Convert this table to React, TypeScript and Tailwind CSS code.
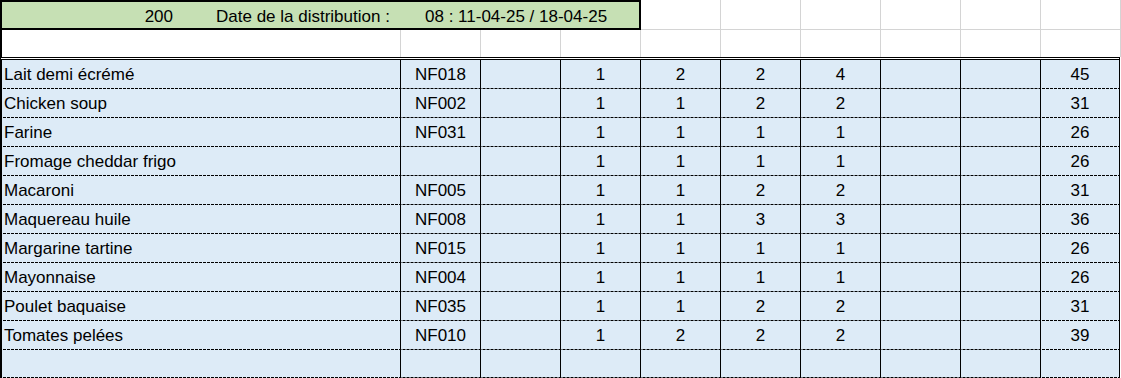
import React from 'react';

type Row = [string, string, string, string, string, string, string];

const rows: Row[] = [
  ['Lait demi écrémé', 'NF018', '1', '2', '2', '4', '45'],
  ['Chicken soup', 'NF002', '1', '1', '2', '2', '31'],
  ['Farine', 'NF031', '1', '1', '1', '1', '26'],
  ['Fromage cheddar frigo', '', '1', '1', '1', '1', '26'],
  ['Macaroni', 'NF005', '1', '1', '2', '2', '31'],
  ['Maquereau huile', 'NF008', '1', '1', '3', '3', '36'],
  ['Margarine tartine', 'NF015', '1', '1', '1', '1', '26'],
  ['Mayonnaise', 'NF004', '1', '1', '1', '1', '26'],
  ['Poulet baquaise', 'NF035', '1', '1', '2', '2', '31'],
  ['Tomates pelées', 'NF010', '1', '2', '2', '2', '39'],
];

const dashed =
  'bg-[#ddebf7] bg-[image:linear-gradient(to_right,#000_75%,transparent_75%)] bg-[length:4px_1px] bg-repeat-x bg-bottom';

function Cell({ children, last }: { children?: React.ReactNode; last?: boolean }) {
  return (
    <div
      className={`${last ? 'w-[79px]' : 'w-[80px]'} border-l border-black flex items-center justify-center pb-px ${dashed}`}
    >
      {children}
    </div>
  );
}

function TableRow({ row, height }: { row?: Row; height: string }) {
  const [name, code, a, b, c, d, total] = row ?? ['', '', '', '', '', '', ''];
  return (
    <div className={`flex ${height}`}>
      <div className={`w-[398px] flex items-center pl-[2px] pb-px ${dashed}`}>{name}</div>
      <Cell>{code}</Cell>
      <Cell />
      <Cell>{a}</Cell>
      <Cell>{b}</Cell>
      <Cell>{c}</Cell>
      <Cell>{d}</Cell>
      <Cell />
      <Cell />
      <Cell last>{total}</Cell>
    </div>
  );
}

export default function App() {
  return (
    <div className="w-[1121px] h-[378px] overflow-hidden bg-white text-black font-['Liberation_Sans',Arial,sans-serif] text-[17px] leading-none">
      {/* header band */}
      <div className="flex h-[30px]">
        <div className="w-[641px] border-2 border-black bg-[#c6e0b4] flex items-center pt-[2px]">
          <span className="w-[171px] text-right">200</span>
          <span className="ml-[43px] w-[209px]">Date de la distribution :</span>
          <span>08 : 11-04-25 / 18-04-25</span>
        </div>
        {[0, 1, 2, 3, 4, 5].map((i) => (
          <div key={i} className="w-[80px] border-r border-b border-[#d4d4d4]" />
        ))}
      </div>

      {/* empty white row */}
      <div className="flex h-[27px]">
        <div className="w-[401px] border-l-2 border-l-black border-r border-r-[#d4d4d4]" />
        {[0, 1, 2, 3, 4, 5, 6, 7, 8].map((i) => (
          <div key={i} className="w-[80px] border-r border-[#d4d4d4]" />
        ))}
      </div>

      {/* product table */}
      <div className="w-[1120px] border-t-[3px] border-double border-black border-l-2 border-r">
        {rows.map((r) => (
          <TableRow key={r[0]} row={r} height="h-[29px]" />
        ))}
        <TableRow height="h-[28px]" />
      </div>
    </div>
  );
}
